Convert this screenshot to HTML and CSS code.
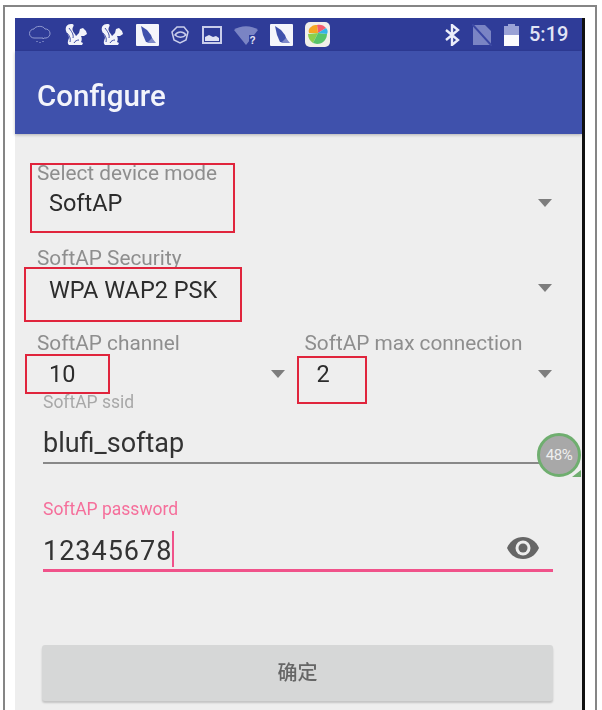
FILE: index.html
```html
<!DOCTYPE html>
<html lang="en">
<head>
<meta charset="utf-8">
<title>Configure</title>
<link rel="stylesheet" href="styles.css">
</head>
<body>
<div class="frame">
  <div class="phone">
    <div class="status">
      <div class="icons">
        <svg class="ic" width="24" height="20" viewBox="0 0 24 20" fill="none" stroke="#8f98cf" stroke-width="1"><path d="M6 13a4.500 4.500 0 0 1 0-9c1-3 9-4 11 0a4.500 4.500 0 0 1 1 9h-2l-1 1v-1H6z"/><path d="M9 16v1M12 17v1M15 16v1" stroke-width="1.300"/></svg>
        <svg class="ic" width="24" height="24" viewBox="0 0 24 24"><path d="M7 1C3 1 1 4 2 8c1 3 3 4 3 7-1 3-2 5 0 7h13l1-2-2-1c1-2 1-4 0-6h3l3-2-1-3-3-3-3 1-1 4-3 3c-1-3-5-5-3-9 1-1 1-3-1-3z" fill="#f2f3fa"/><path d="M5 5c2 3 5 6 4 10M3 10c2 2 4 5 3 9M10 20c1-2 3-3 5-3" stroke="#3a47a3" fill="none" stroke-width="1"/></svg>
        <svg class="ic" width="24" height="24" viewBox="0 0 24 24"><path d="M7 1C3 1 1 4 2 8c1 3 3 4 3 7-1 3-2 5 0 7h13l1-2-2-1c1-2 1-4 0-6h3l3-2-1-3-3-3-3 1-1 4-3 3c-1-3-5-5-3-9 1-1 1-3-1-3z" fill="#f2f3fa"/><path d="M5 5c2 3 5 6 4 10M3 10c2 2 4 5 3 9M10 20c1-2 3-3 5-3" stroke="#3a47a3" fill="none" stroke-width="1"/></svg>
        <svg class="ic" width="23" height="22" viewBox="0 0 23 22"><rect width="23" height="22" rx="1" fill="#f4f5fb"/><path d="M5 2l6 4 4 5 3 8-8-1-3-7z" fill="#3f51ac"/><path d="M11 19h9l-4-5z" fill="#7f8ac9"/></svg>
        <svg class="ic" width="19" height="19" viewBox="0 0 19 19" fill="none" stroke="#c9cdea" stroke-width="1.500"><path d="M6 2h7l4 5-2 8-6 3-6-3-2-8z"/><path d="M4 10c3-4 8-4 11 0-3 3-8 3-11 0z"/></svg>
        <svg class="ic" width="20" height="18" viewBox="0 0 20 18"><rect x="1" y="1" width="18" height="16" fill="none" stroke="#c9cdea" stroke-width="2"/><path d="M3 15v-4l4-2 4 2 3-1 3 2v3z" fill="#dfe2f2"/></svg>
        <svg class="ic" width="24" height="20" viewBox="0 0 24 20"><path d="M0 5c6-5 18-5 24 0L12 20z" fill="#7a84c4"/><path d="M15 10h7v9h-7z" fill="#2f3c98"/><text class="wifiq" x="15.500" y="19">?</text></svg>
        <svg class="ic" width="23" height="22" viewBox="0 0 23 22"><rect width="23" height="22" rx="1" fill="#f4f5fb"/><path d="M5 2l6 4 4 5 3 8-8-1-3-7z" fill="#3f51ac"/><path d="M11 19h9l-4-5z" fill="#7f8ac9"/></svg>
        <svg class="ic" width="25" height="25" viewBox="0 0 25 25"><rect width="25" height="25" rx="5" fill="#f1efe9"/><path d="M12 3c3-1 7 0 9 3l-8 5z" fill="#f25c6e"/><path d="M6 5c2-2 4-2 6-2l1 8-9 0c-1-2 0-5 2-6z" fill="#f6a623"/><path d="M3 12l10-1-5 10c-3-2-5-5-5-9z" fill="#8ccf4d"/><path d="M13 11l9 1c0 5-4 10-10 10l-4-1z" fill="#57c46a"/><path d="M13 11l8-5c2 2 2 4 1 6z" fill="#35b4e6"/></svg>
      </div>
      <div class="sys">
        <svg class="bt" width="15" height="22" viewBox="0 0 15 22" fill="none" stroke="#eceefa" stroke-width="2.400"><path d="M1 6l12 10-6 5V1l6 5L1 16"/></svg>
        <svg class="sim" width="20" height="22" viewBox="0 0 20 22"><path d="M1 1h12l6 6v14H1z" fill="#7a84c4"/><path d="M0 0l20 22" stroke="#3a47a3" stroke-width="2"/></svg>
        <svg class="batt" width="15" height="22" viewBox="0 0 15 22"><path d="M4 2V0h7v2h4v20H0V2z" fill="#9aa2d6"/><path d="M0 11h15v11H0z" fill="#fbfbfe"/></svg>
        <span class="time">5:19</span>
      </div>
    </div>
    <div class="toolbar"><h1 class="title">Configure</h1></div>
    <div class="content">
      <div class="field f-mode">
        <div class="label">Select device mode</div>
        <div class="value-row"><span class="value">SoftAP</span><i class="caret"></i></div>
      </div>
      <div class="field f-sec">
        <div class="label">SoftAP Security</div>
        <div class="value-row"><span class="value">WPA WAP2 PSK</span><i class="caret"></i></div>
      </div>
      <div class="pair">
        <div class="field f-half">
          <div class="label">SoftAP channel</div>
          <div class="value-row"><span class="value">10</span><i class="caret"></i></div>
        </div>
        <div class="field f-half">
          <div class="label">SoftAP max connection</div>
          <div class="value-row"><span class="value">2</span><i class="caret"></i></div>
        </div>
      </div>
      <div class="input ssid">
        <div class="small">SoftAP ssid</div>
        <div class="entry">blufi_softap</div>
      </div>
      <div class="input pass">
        <div class="small">SoftAP password</div>
        <div class="entry spaced"><span>12345678</span><i class="cursor"></i>
          <svg class="eye" width="34" height="24" viewBox="0 0 34 24"><path d="M17 1C10 1 4 5 1 12c3 7 9 11 16 11s13-4 16-11C30 5 24 1 17 1z" fill="#666"/><circle cx="17" cy="12" r="7.500" fill="#eee"/><circle cx="17" cy="12" r="4.500" fill="#666"/></svg>
        </div>
      </div>
      <button class="ok" type="button">确定</button>
      <div class="badge"><span>48%</span></div>
    </div>
    <div class="mark m1"></div>
    <div class="mark m2"></div>
    <div class="mark m3"></div>
    <div class="mark m4"></div>
  </div>
</div>
</body>
</html>
```
FILE: styles.css
```css
* { box-sizing: border-box; }
html, body { margin: 0; height: 100%; overflow: hidden; background: #fff; }
body { font-family: Roboto, "Noto Sans CJK SC", sans-serif; padding: 5px 5px 0 3px; }
.frame { height: 705px; border: 2px solid #858585; border-bottom: 0; padding: 11px 10px 0; }
.phone { position: relative; width: 570px; height: 692px; border-right: 3px solid #111; background: #eee; filter: blur(0.55px); }
.status { height: 33px; background: #2f3c98; display: flex; align-items: center; justify-content: space-between; padding: 0 13px; }
.icons { display: flex; align-items: center; gap: 12px; }
.sys { display: flex; align-items: center; }
.bt { margin-right: 12px; }
.sim { margin-right: 12px; }
.batt { margin-right: 10px; }
.time { color: #e2e5f5; font-size: 20px; font-weight: 500; line-height: 33px; width: 40px; }
.wifiq { font: 700 10px "Liberation Sans", sans-serif; fill: #e4e6f6; }
.toolbar { height: 83px; background: #3f51ac; display: flex; align-items: center; padding: 6px 22px 0; box-shadow: 0 1px 3px rgba(0, 0, 0, .25); position: relative; }
.title { margin: 0; color: #f3f4fb; font-size: 29.500px; font-weight: 500; line-height: 32px; }
.content { position: relative; height: 576px; padding: 27px 30px 0 22px; }
.field { position: relative; }
.label { color: #8e8e8e; font-size: 20.800px; line-height: 24px; white-space: nowrap; }
.value-row { display: flex; align-items: center; justify-content: space-between; padding: 0 0 0 12px; height: 36px; }
.value { color: #2c2c2c; font-size: 23.500px; line-height: 26px; }
.caret { width: 0; height: 0; border-left: 7px solid transparent; border-right: 7px solid transparent; border-top: 8px solid #7d7d7d; }
.f-mode { height: 85px; }
.f-sec { height: 85px; }
.f-sec .value { margin-top: 3px; }
.f-sec .caret { margin-top: -1px; }
.pair { display: flex; height: 62px; gap: 20px; }
.f-half { flex: 1 1 0; }
.f-half .value-row { height: 26px; margin-top: 6px; }
.input { margin-left: 6px; margin-right: -1px; }
.small { font-size: 17.500px; line-height: 18px; color: #a8a8a8; white-space: nowrap; }
.entry { position: relative; display: flex; align-items: center; height: 38px; margin-top: 15px; padding-bottom: 2px; color: #333; font-size: 27px; border-bottom: 2px solid #888; }
.ssid { height: 81px; }
.pass { margin-top: 26px; }
.pass .small { color: #f56f9b; }
.pass .entry { border-bottom: 3px solid #f0528a; height: 44px; margin-top: 10px; padding: 4px 0 0; }
.spaced { letter-spacing: 1px; }
.cursor { width: 2px; height: 36px; margin-top: -4px; background: #f0528a; }
.eye { position: absolute; right: 13px; top: 8px; }
.ok { display: block; width: 511px; height: 56px; margin: 73px 0 0 5px; padding: 0 0 4px; border: 0; border-radius: 3px; background: #d6d7d7; box-shadow: 0 2px 2px rgba(0, 0, 0, .18); color: #666; font: 500 20px "Noto Sans CJK SC", sans-serif; }
.badge { position: absolute; left: 522px; top: 299px; width: 44px; height: 44px; border-radius: 50%; background: #a8a8a8; border: 3px solid #6fae6f; display: flex; align-items: center; justify-content: center; }
.badge::after { content: ""; position: absolute; right: -3px; bottom: -3px; width: 0; height: 0; border-left: 9px solid transparent; border-bottom: 7px solid #6fae6f; }
.badge span { color: #efefef; font-size: 15px; font-weight: 400; letter-spacing: -0.5px; }
.mark { position: absolute; border: 2.500px solid #e0243c; }
.m1 { left: 15px; top: 145px; width: 205px; height: 70px; }
.m2 { left: 9px; top: 249px; width: 218px; height: 55px; }
.m3 { left: 10px; top: 336px; width: 85px; height: 40px; }
.m4 { left: 282px; top: 338px; width: 70px; height: 48px; }
```
